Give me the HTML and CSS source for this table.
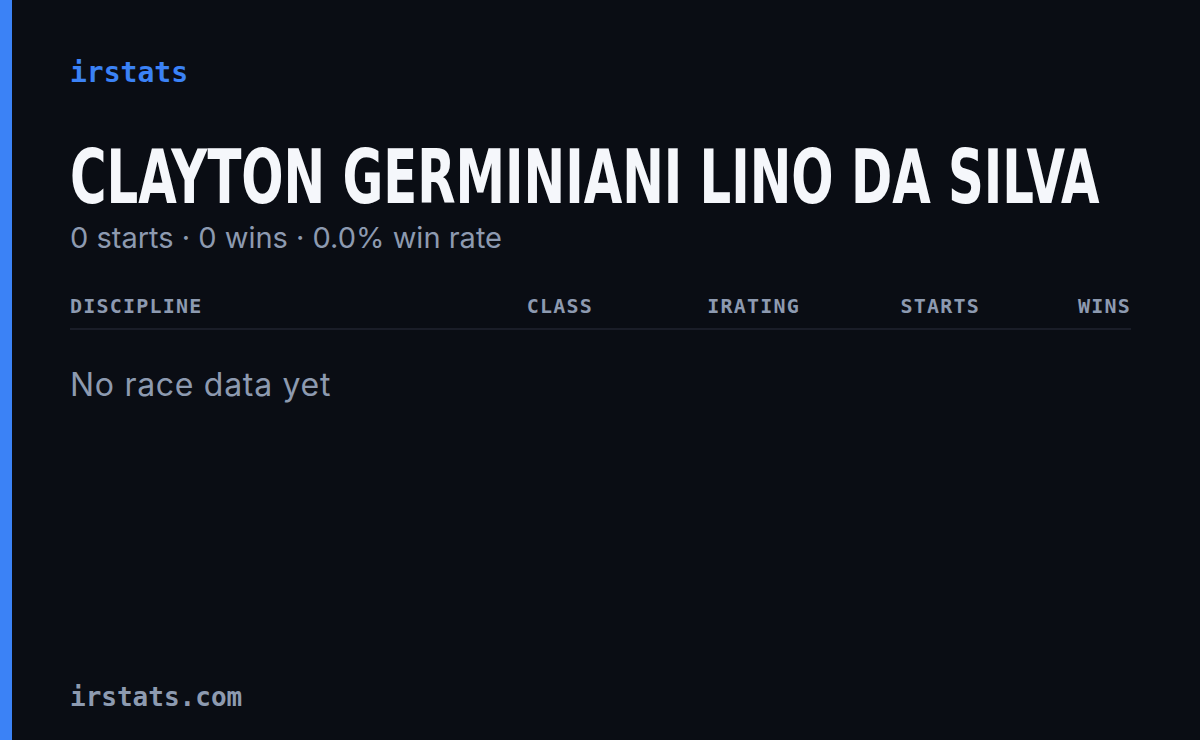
FILE: index.html
```html
<!DOCTYPE html>
<html>
<head>
<meta charset="utf-8">
<link rel="stylesheet" href="styles.css">
</head>
<body>
<div class="card">
  <div class="content">
    <div class="brand">irstats</div>
    <h1 class="name"><span class="name-text">CLAYTON GERMINIANI LINO DA SILVA</span></h1>
    <div class="summary">0 starts · 0 wins · 0.0% win rate</div>
    <div class="table-head">
      <span class="col col-discipline">DISCIPLINE</span>
      <span class="col col-class">CLASS</span>
      <span class="col col-irating">IRATING</span>
      <span class="col col-starts">STARTS</span>
      <span class="col col-wins">WINS</span>
    </div>
    <div class="empty">No race data yet</div>
    <div class="spacer"></div>
    <div class="footer">irstats.com</div>
  </div>
</div>
</body>
</html>
```

FILE: styles.css
```css
html, body {
  margin: 0;
  padding: 0;
  background: #0a0d14;
}
.card {
  width: 1200px;
  height: 740px;
  box-sizing: border-box;
  border-left: 12px solid #3b82f6;
  background: #0a0d14;
  display: flex;
  overflow: hidden;
}
.content {
  flex: 1;
  min-width: 0;
  display: flex;
  flex-direction: column;
  padding: 56px 69px 27px 58px;
}
.brand {
  font-family: "DejaVu Sans Mono", monospace;
  font-weight: bold;
  font-size: 28px;
  line-height: 34px;
  color: #3b82f6;
}
.name {
  margin: 44px 0 0 0;
  font-family: "DejaVu Sans Condensed", "DejaVu Sans", sans-serif;
  font-stretch: condensed;
  font-weight: bold;
  font-size: 75px;
  line-height: 86px;
  color: #f5f7fb;
  white-space: nowrap;
  height: 86px;
}
.name-text {
  display: inline-block;
  transform: scaleX(0.737);
  transform-origin: left center;
}
.summary {
  font-family: Inter, sans-serif;
  font-size: 29px;
  line-height: 36px;
  color: #8d9ab0;
}
.table-head {
  display: grid;
  grid-template-columns: 1fr 150px 207px 180px 151px;
  margin-top: 36px;
  padding-bottom: 8px;
  border-bottom: 2px solid #1a1d28;
  font-family: "DejaVu Sans Mono", monospace;
  font-weight: bold;
  font-size: 20px;
  line-height: 28px;
  letter-spacing: 1.2px;
  color: #8d9ab0;
}
.col { text-align: right; }
.col-discipline { text-align: left; }
.empty {
  margin-top: 35px;
  font-family: Inter, sans-serif;
  font-size: 32px;
  letter-spacing: 0.7px;
  line-height: 40px;
  color: #8d9ab0;
}
.spacer { flex: 1; }
.footer {
  font-family: "DejaVu Sans Mono", monospace;
  font-weight: bold;
  font-size: 26px;
  line-height: 32px;
  color: #8d9ab0;
}
```
